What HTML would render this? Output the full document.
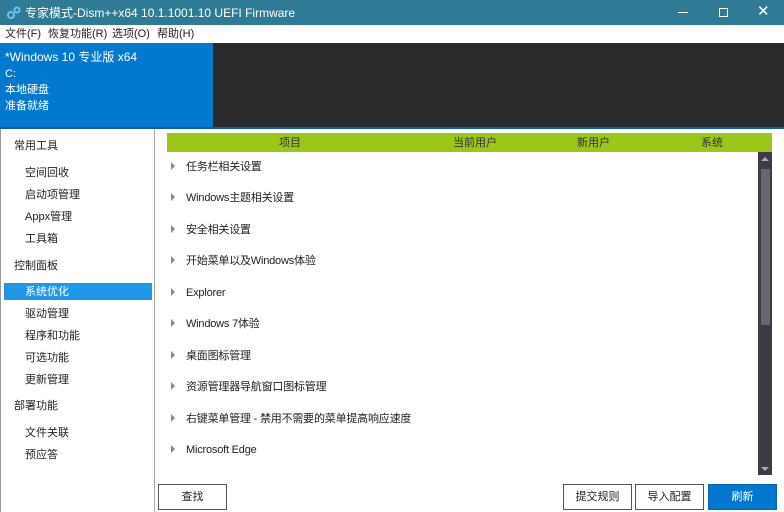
<!DOCTYPE html>
<html><head><meta charset="utf-8"><style>
*{margin:0;padding:0;box-sizing:border-box}
body{width:784px;height:512px;overflow:hidden;background:#fff;font-family:"Liberation Sans","Noto Sans CJK SC",sans-serif;font-size:11px;color:#222;position:relative}
.a{position:absolute;white-space:nowrap;line-height:14px}
#title{left:0;top:0;width:784px;height:25px;background:#2f7b95;color:#fff;font-size:12px}
#menu{left:0;top:25px;width:784px;height:18px;background:#fff;font-size:11px}
#blue{left:0;top:43px;width:213px;height:85px;background:#0079cf;color:#fff;font-size:11px}
#dark{left:213px;top:43px;width:571px;height:85px;background:#2a2a2c}
.tri{width:0;height:0;border-left:4px solid #888;border-top:4px solid transparent;border-bottom:4px solid transparent}
.btn{height:26px;border:1px solid #555;background:#fff;text-align:center;line-height:24px;font-size:11px}
.m span.a{letter-spacing:-0.2px}
</style></head><body>
<div class="a" id="title">
<svg class="a" style="left:7px;top:6px" width="14" height="14" viewBox="0 0 14 14"><circle cx="4" cy="9" r="3" fill="none" stroke="#6cc3f0" stroke-width="2"/><circle cx="10" cy="4" r="2.5" fill="none" stroke="#6cc3f0" stroke-width="2"/></svg>
<span class="a" style="left:25px;top:6px">专家模式-Dism++x64 10.1.1001.10 UEFI Firmware</span>
<div class="a" style="left:678px;top:12px;width:10px;height:1px;background:#fff"></div>
<div class="a" style="left:719px;top:8px;width:9px;height:9px;border:1px solid #fff"></div>
<span class="a" style="left:757px;top:5px;font-size:15px">✕</span>
</div>
<div class="a" id="menu">
<span class="a" style="left:5px;top:2px">文件(F)</span>
<span class="a" style="left:48px;top:2px">恢复功能(R)</span>
<span class="a" style="left:112px;top:2px">选项(O)</span>
<span class="a" style="left:157px;top:2px">帮助(H)</span>
</div>
<div class="a" id="blue">
<span class="a" style="left:5px;top:7px;font-size:12px">*Windows 10 专业版 x64</span>
<span class="a" style="left:5px;top:24px">C:</span>
<span class="a" style="left:5px;top:40px">本地硬盘</span>
<span class="a" style="left:5px;top:56px">准备就绪</span>
</div>
<div class="a" id="dark"></div>
<div class="a" style="left:0;top:127px;width:784px;height:2px;background:#0d5f99"></div>
<div class="a" style="left:0;top:129px;width:1px;height:383px;background:#999"></div>
<div class="a" style="left:154px;top:129px;width:1px;height:383px;background:#aaa"></div>
<div class="a" style="left:4px;top:283px;width:148px;height:17px;background:#1e98e6"></div>
<span class="a" style="left:14px;top:139px">常用工具</span>
<span class="a" style="left:25px;top:166px">空间回收</span>
<span class="a" style="left:25px;top:188px">启动项管理</span>
<span class="a" style="left:25px;top:210px">Appx管理</span>
<span class="a" style="left:25px;top:232px">工具箱</span>
<span class="a" style="left:14px;top:259px">控制面板</span>
<span class="a" style="left:25px;top:285px;color:#fff">系统优化</span>
<span class="a" style="left:25px;top:307px">驱动管理</span>
<span class="a" style="left:25px;top:329px">程序和功能</span>
<span class="a" style="left:25px;top:351px">可选功能</span>
<span class="a" style="left:25px;top:373px">更新管理</span>
<span class="a" style="left:14px;top:399px">部署功能</span>
<span class="a" style="left:25px;top:426px">文件关联</span>
<span class="a" style="left:25px;top:448px">预应答</span>
<div class="a" style="left:167px;top:133px;width:605px;height:19px;background:#9bc71a;color:#333">
<span class="a" style="left:112px;top:3px">项目</span>
<span class="a" style="left:286px;top:3px">当前用户</span>
<span class="a" style="left:410px;top:3px">新用户</span>
<span class="a" style="left:534px;top:3px">系统</span>
</div>
<div class="a" style="left:758px;top:152px;width:14px;height:323px;background:#3d3c44"></div>
<div class="a" style="left:761px;top:169px;width:9px;height:156px;background:#68676f"></div>
<div class="a" style="left:761px;top:157px;border-left:4px solid transparent;border-right:4px solid transparent;border-bottom:4px solid #aaa"></div>
<div class="a" style="left:761px;top:467px;border-left:4px solid transparent;border-right:4px solid transparent;border-top:4px solid #aaa"></div>
<div class="m">
<div class="a tri" style="left:171px;top:162px"></div><span class="a" style="left:186px;top:160px">任务栏相关设置</span>
<div class="a tri" style="left:171px;top:193px"></div><span class="a" style="left:186px;top:191px">Windows主题相关设置</span>
<div class="a tri" style="left:171px;top:225px"></div><span class="a" style="left:186px;top:223px">安全相关设置</span>
<div class="a tri" style="left:171px;top:256px"></div><span class="a" style="left:186px;top:254px">开始菜单以及Windows体验</span>
<div class="a tri" style="left:171px;top:288px"></div><span class="a" style="left:186px;top:286px">Explorer</span>
<div class="a tri" style="left:171px;top:319px"></div><span class="a" style="left:186px;top:317px">Windows 7体验</span>
<div class="a tri" style="left:171px;top:351px"></div><span class="a" style="left:186px;top:349px">桌面图标管理</span>
<div class="a tri" style="left:171px;top:382px"></div><span class="a" style="left:186px;top:380px">资源管理器导航窗口图标管理</span>
<div class="a tri" style="left:171px;top:414px"></div><span class="a" style="left:186px;top:412px">右键菜单管理 - 禁用不需要的菜单提高响应速度</span>
<div class="a tri" style="left:171px;top:445px"></div><span class="a" style="left:186px;top:443px">Microsoft Edge</span>
</div>
<div class="a btn" style="left:158px;top:484px;width:69px">查找</div>
<div class="a btn" style="left:563px;top:484px;width:69px">提交规则</div>
<div class="a btn" style="left:635px;top:484px;width:69px">导入配置</div>
<div class="a btn" style="left:708px;top:484px;width:69px;background:#0078d0;border-color:#0a66b0;color:#fff">刷新</div>
</body></html>
